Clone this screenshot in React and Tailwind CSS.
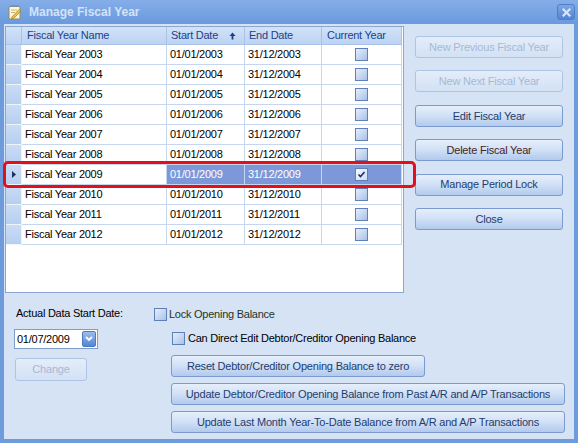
import React from "react";

const rows = [2003, 2004, 2005, 2006, 2007, 2008, 2009, 2010, 2011, 2012];

function Check({ checked, selected }) {
  return (
    <div
      className={
        "w-[13px] h-[13px] border border-[#5f7fb8] flex items-center justify-center " +
        (selected
          ? "bg-gradient-to-br from-[#f4f8fe] to-[#cddcf3]"
          : "bg-gradient-to-br from-[#e6eefa] to-[#a9c2e8]")
      }
    >
      {checked && (
        <svg width="9" height="9" viewBox="0 0 9 9">
          <path d="M1.5 4.5 L3.5 6.5 L7.5 2" stroke="#1c2f66" strokeWidth="1.6" fill="none" />
        </svg>
      )}
    </div>
  );
}

function Btn({ children, disabled, className = "", textClass = "" }) {
  return (
    <div
      className={
        "h-[22px] flex items-center justify-center rounded-[3px] border text-[11px] tracking-[-0.2px] " +
        (disabled
          ? "border-[#aec4e4] bg-gradient-to-b from-[#e4edf9] to-[#d3e1f5] text-[#a6b9d4] "
          : "border-[#7b9bd0] bg-gradient-to-b from-[#e6effb] via-[#d0e0f6] to-[#b2caec] text-[#1f3c6c] ") +
        className
      }
    >
      <span className={textClass}>{children}</span>
    </div>
  );
}

export default function App() {
  const cellBase = "border-r border-b border-[#c5d6ee] flex items-center";
  return (
    <div className="relative w-[578px] h-[443px] flex flex-col bg-[#6e9bdc] font-['Liberation_Sans',Arial,sans-serif] text-[11px] tracking-[-0.25px] text-black overflow-hidden">
      {/* Title bar */}
      <div className="h-[24px] flex items-center pl-[8px] pr-[3px] bg-gradient-to-b from-[#85aee8] to-[#6a99de]">
        <svg width="14" height="15" viewBox="0 0 14 15">
          <rect x="1" y="1.5" width="11" height="12.5" rx="1" fill="#fbf5dc" stroke="#9a8a50" strokeWidth="1" />
          <path d="M3 5 H9 M3 7.5 H7" stroke="#c9b87a" strokeWidth="1" />
          <path d="M4 12 L11 4.5 L12.8 6 L5.8 13.2 L3.6 13.6 Z" fill="#f0c640" stroke="#a07a20" strokeWidth="0.7" />
          <path d="M2.5 1 H10.5" stroke="#6d8fc8" strokeWidth="1.5" />
        </svg>
        <span className="ml-[7px] font-bold text-[12px] tracking-normal text-[#d3e3f8]">Manage Fiscal Year</span>
        <div className="ml-auto w-[18px] h-[16px] rounded-[3px] border border-[#4f7fc6] bg-gradient-to-b from-[#7da6e2] to-[#5485d2] flex items-center justify-center">
          <svg width="9" height="9" viewBox="0 0 9 9">
            <path d="M1.5 1.5 L7.5 7.5 M7.5 1.5 L1.5 7.5" stroke="#dce6f3" strokeWidth="2.2" strokeLinecap="square" />
          </svg>
        </div>
      </div>

      {/* Body */}
      <div className="flex-1 mx-[4px] mb-[4px] bg-[#d6e3f5] flex flex-col">
        <div className="flex items-start">
          {/* Grid */}
          <div className="ml-[1px] mt-[2px] w-[399px] h-[267px] border border-[#8aa7d2] bg-white">
            <div className="grid grid-cols-[16px_145px_78px_77px_80px]">
              {/* header */}
              <div className="h-[18px] border-r border-b border-[#a8c2e8] bg-gradient-to-b from-[#d2e2f8] to-[#bcd3f2]" />
              <div className="h-[18px] border-r border-b border-[#a8c2e8] bg-gradient-to-b from-[#d2e2f8] to-[#bcd3f2] flex items-center pl-[5px] text-[#1d3f8a]">Fiscal Year Name</div>
              <div className="h-[18px] border-r border-b border-[#a8c2e8] bg-gradient-to-b from-[#d2e2f8] to-[#bcd3f2] flex items-center pl-[4px] text-[#1d3f8a]">
                Start Date
                <svg className="ml-[11px]" width="7" height="8" viewBox="0 0 7 8">
                  <path d="M3.5 0.5 L0.5 4 H2.6 V7.5 H4.4 V4 H6.5 Z" fill="#1d3f8a" />
                </svg>
              </div>
              <div className="h-[18px] border-r border-b border-[#a8c2e8] bg-gradient-to-b from-[#d2e2f8] to-[#bcd3f2] flex items-center pl-[4px] text-[#1d3f8a]">End Date</div>
              <div className="h-[18px] border-r border-b border-[#a8c2e8] bg-gradient-to-b from-[#d2e2f8] to-[#bcd3f2] flex items-center pl-[5px] text-[#1d3f8a]">Current Year</div>

              {rows.map((y) => {
                const sel = y === 2009;
                const selCell = sel ? " bg-[#7d98d8] text-white" : "";
                return (
                  <React.Fragment key={y}>
                    <div className="h-[20px] border-r border-b border-[#eef4fc] bg-gradient-to-b from-[#cadcf5] to-[#b7cff0] flex items-center justify-center">
                      {sel && (
                        <svg width="4" height="7" viewBox="0 0 4 7">
                          <path d="M0 0 L4 3.5 L0 7 Z" fill="#1c2f66" />
                        </svg>
                      )}
                    </div>
                    <div className={"h-[20px] pl-[3px] " + cellBase}>Fiscal Year {y}</div>
                    <div className={"h-[20px] pl-[3px] " + cellBase + selCell}>01/01/{y}</div>
                    <div className={"h-[20px] pl-[3px] " + cellBase + selCell}>31/12/{y}</div>
                    <div className={"h-[20px] justify-center " + cellBase + selCell}>
                      <Check checked={sel} selected={sel} />
                    </div>
                  </React.Fragment>
                );
              })}
            </div>
          </div>

          {/* Right buttons */}
          <div className="ml-[11px] mt-[12px] w-[148px] flex flex-col gap-[12.4px]">
            <Btn disabled>New Previous Fiscal Year</Btn>
            <Btn disabled>New Next Fiscal Year</Btn>
            <Btn>Edit Fiscal Year</Btn>
            <Btn textClass="text-[#4a2222]">Delete Fiscal Year</Btn>
            <Btn>Manage Period Lock</Btn>
            <Btn>Close</Btn>
          </div>
        </div>

        {/* Bottom */}
        <div className="flex">
          <div className="ml-[10px] w-[140px] flex flex-col">
            <div className="mt-[14px] ml-[2px] leading-[13px]">Actual Data Start Date:</div>
            <div className="mt-[9px] w-[84px] h-[20px] border border-[#7f9dc9] bg-white flex items-center pl-[2px]">
              <span>01/07/2009</span>
              <div className="ml-auto mr-[1px] w-[14px] h-[16px] rounded-[2px] border border-[#4d7cc4] bg-gradient-to-b from-[#9dbdec] to-[#5286d4] flex items-center justify-center">
                <svg width="8" height="6" viewBox="0 0 8 6">
                  <path d="M1 1 L4 4 L7 1" stroke="white" strokeWidth="1.8" fill="none" />
                </svg>
              </div>
            </div>
            <Btn disabled className="mt-[9px] ml-[1px] w-[72px] !h-[23px]">Change</Btn>
          </div>

          <div className="flex flex-col">
            <div className="mt-[15px] h-[13px] flex items-center">
              <Check />
              <span className="ml-[2px] text-[#1e361e]">Lock Opening Balance</span>
            </div>
            <div className="ml-[18px] mt-[11px] h-[13px] flex items-center">
              <Check />
              <span className="ml-[3px]">Can Direct Edit Debtor/Creditor Opening Balance</span>
            </div>
            <Btn className="ml-[17px] mt-[10px] w-[254px]">Reset Debtor/Creditor Opening Balance to zero</Btn>
            <Btn className="ml-[17px] mt-[6px] w-[394px]">Update Debtor/Creditor Opening Balance from Past A/R and A/P Transactions</Btn>
            <Btn className="ml-[17px] mt-[6px] w-[394px]">Update Last Month Year-To-Date Balance from A/R and A/P Transactions</Btn>
          </div>
        </div>
      </div>

      {/* Red annotation */}
      <div className="absolute left-[3px] top-[161px] w-[413px] h-[27px] rounded-[5px] border-[3px] border-[#e3101a] pointer-events-none" />
    </div>
  );
}
